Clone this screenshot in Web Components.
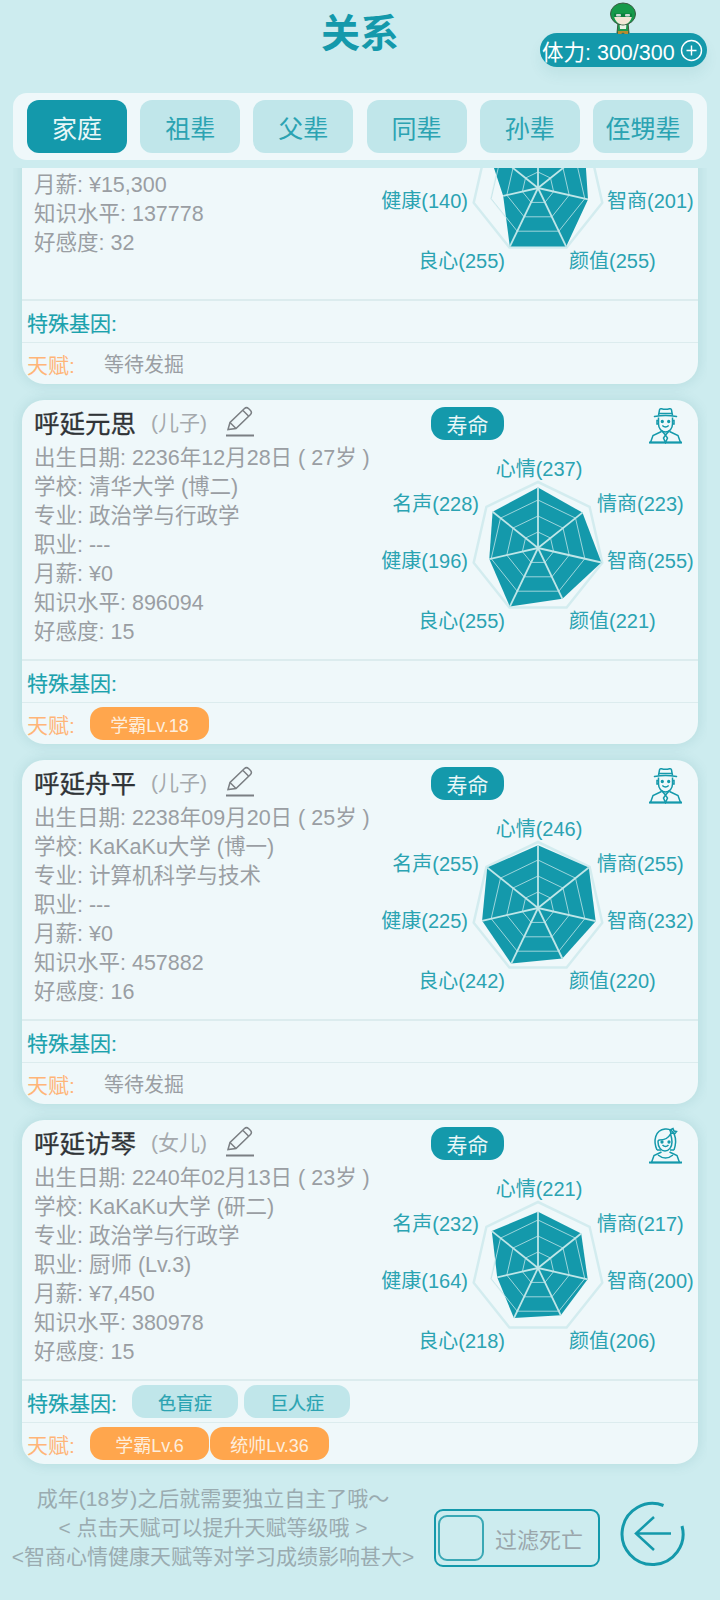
<!DOCTYPE html>
<html lang="zh"><head><meta charset="utf-8"><title>关系</title>
<style>
html,body{margin:0;padding:0;background:#cdecef}
body{font-family:"Liberation Sans","Noto Sans CJK SC",sans-serif}
</style></head>
<body>
<relation-page>
  <page-header slot="header"></page-header>
  <tab-bar slot="tabs">
    <tab-btn active>家庭</tab-btn><tab-btn>祖辈</tab-btn><tab-btn>父辈</tab-btn><tab-btn>同辈</tab-btn><tab-btn>孙辈</tab-btn><tab-btn>侄甥辈</tab-btn>
  </tab-bar>

  <rel-card name="呼延元德" role="(父亲)" icon="man" values="240,235,201,255,255,140,255">
    <div>出生日期: 2210年05月16日 ( 53岁 )</div><div>学校: 清华大学 (博士)</div><div>职业: 厨师 (Lv.10)</div><div>月薪: ¥15,300</div><div>知识水平: 137778</div><div>好感度: 32</div>
    <span slot="talents" class="none">等待发掘</span>
  </rel-card>

  <rel-card name="呼延元思" role="(儿子)" icon="man" values="237,223,255,221,255,196,228">
    <div>出生日期: 2236年12月28日 ( 27岁 )</div><div>学校: 清华大学 (博二)</div><div>专业: 政治学与行政学</div><div>职业: ---</div><div>月薪: ¥0</div><div>知识水平: 896094</div><div>好感度: 15</div>
    <info-chip slot="talents" kind="talent">学霸Lv.18</info-chip>
  </rel-card>

  <rel-card name="呼延舟平" role="(儿子)" icon="man" values="246,255,232,220,242,225,255">
    <div>出生日期: 2238年09月20日 ( 25岁 )</div><div>学校: KaKaKu大学 (博一)</div><div>专业: 计算机科学与技术</div><div>职业: ---</div><div>月薪: ¥0</div><div>知识水平: 457882</div><div>好感度: 16</div>
    <span slot="talents" class="none">等待发掘</span>
  </rel-card>

  <rel-card name="呼延访琴" role="(女儿)" icon="woman" values="221,217,200,206,218,164,232">
    <div>出生日期: 2240年02月13日 ( 23岁 )</div><div>学校: KaKaKu大学 (研二)</div><div>专业: 政治学与行政学</div><div>职业: 厨师 (Lv.3)</div><div>月薪: ¥7,450</div><div>知识水平: 380978</div><div>好感度: 15</div>
    <info-chip slot="genes" kind="gene">色盲症</info-chip><info-chip slot="genes" kind="gene">巨人症</info-chip>
    <info-chip slot="talents" kind="talent">学霸Lv.6</info-chip><info-chip slot="talents" kind="talent">统帅Lv.36</info-chip>
  </rel-card>

  <page-footer slot="footer"></page-footer>
</relation-page>

<script>
const TEAL='#1499ab';
function def(name,html,extra){
  customElements.define(name,class extends HTMLElement{
    constructor(){super();this.attachShadow({mode:'open'}).innerHTML=html;}
    connectedCallback(){if(extra)extra.call(this,this.shadowRoot);}
  });
}

def('relation-page',`<style>
:host{display:flex;flex-direction:column;width:720px;height:1600px;overflow:hidden;background:#cdecef;color:#333;
font-family:"Liberation Sans","Noto Sans CJK SC",sans-serif}
.scroller{margin:8px 13px 0;height:1310px;overflow:hidden;padding:0 9px;box-sizing:border-box;flex:none}
.list{margin-top:-128px;display:flex;flex-direction:column;gap:16px}
</style>
<slot name="header"></slot><slot name="tabs"></slot>
<div class="scroller"><div class="list"><slot></slot></div></div>
<slot name="footer"></slot>`);

def('page-header',`<style>
:host{display:block;height:93px;position:relative;flex:none}
.wrap{display:grid;grid-template-columns:1fr auto 1fr;height:100%}
h1{margin:10px 0 0;font-size:39px;line-height:48px;font-weight:700;color:#1499ab;grid-column:2}
.pill{grid-column:3;justify-self:end;margin:33px 13px 0 0;width:167px;height:34px;border-radius:17px;background:#1499ab;color:#fff;
font-size:21.5px;display:flex;align-items:center;padding-left:2px;box-sizing:border-box;box-shadow:0 8px 14px rgba(20,110,120,.07);white-space:nowrap}
.pill svg{margin-left:5px;flex:none}
.hero{position:absolute;left:609px;top:2px}
</style>
<div class="wrap"><h1>关系</h1>
<div class="pill">体力: 300/300<svg width="23" height="23" viewBox="0 0 23 23" fill="none" stroke="#fff" stroke-width="1.4"><circle cx="11.5" cy="11.5" r="10"/><path d="M11.5 6.5v10M6.5 11.5h10"/></svg></div></div>
<svg class="hero" width="28" height="32" viewBox="0 0 28 32">
<path d="M9 21h10l1 10h-12z" fill="#1d9a4f" stroke="#3a5a3a" stroke-width="1"/>
<path d="M10.500 21h7l-.5 6h-6z" fill="#e9f3e6"/>
<path d="M9 29h10v3h-3l-2-1.500-2 1.500h-3z" fill="#b98b2e"/>
<ellipse cx="14" cy="12" rx="12.500" ry="11" fill="#159a4a" stroke="#3d5a44" stroke-width="1"/>
<path d="M5 14c1 6 5 8.500 9 8.500s8-2.500 9-8.500z" fill="#f3e7d6"/>
<path d="M5 11.500h18v3.500H5z" fill="#0f7f3e"/><rect x="7" y="12" width="5" height="2.500" rx="1" fill="#cfd8d8"/><rect x="16" y="12" width="5" height="2.500" rx="1" fill="#cfd8d8"/>
</svg>`);

def('tab-bar',`<style>
:host{display:flex;justify-content:space-between;flex:none;margin:0 13px;padding:7px 14px;height:67px;box-sizing:border-box;background:#eff8fa;border-radius:14px;width:694px}
</style><slot></slot>`);

def('tab-btn',`<style>
:host{display:flex;align-items:center;justify-content:center;width:100px;height:53px;border-radius:12px;background:#c0e6ea;color:#2ba3b2;font-size:25px}
:host([active]){background:#1499ab;color:#e8f7f8}
</style><slot></slot>`);

def('info-chip',`<style>
:host{display:flex;align-items:center;justify-content:center;height:33px;border-radius:13px;font-size:18px;white-space:nowrap;flex:none}
:host([kind=talent]){width:119px;background:#ffa64d;color:#fdeedd}
:host([kind=gene]){width:106px;background:#c0e6ea;color:#2ba3b2}
</style><slot></slot>`);

const ICONS={
man:`<path d="M9.500 8.500 10.500 3c.2-1 1-1.500 2-1.200 2.500.7 5.500.7 8 0 1-.3 1.800.2 2 1.200l1 5.500M10 6.500h13"/><path d="M5.500 9.500q11 -2 22 0" stroke-linecap="round"/>
<path d="M9.500 10.500v6.500a7 8 0 0 0 14 0v-6.500"/><path d="M9.500 13.500H8v3.500h1.500M23.500 13.500H25v3.500h-1.500"/><path d="M13.300 18.500q3.200 3 6.400 0"/><circle cx="13.300" cy="14.500" r=".9" fill="currentColor"/><circle cx="19.700" cy="14.500" r=".9" fill="currentColor"/>
<path d="M12.500 24.500 4 28.500 1.500 35.500h30l-2.500-7-8.500-4"/><path d="M12.500 23.500 16.500 28l4-4.500M16.500 28l-2 3 2 4.500 2-4.500z"/><path d="M0 35.500h33" stroke-width="2"/>`,
woman:`<path d="M8 23C4 14 6 3 16 2c9-1 13 9 9 21"/><path d="M8 23h4M25 23h-4"/><path d="M10.500 13c5 0 9-2 11-6 1 3 1.500 5 1.500 8 0 5-3 9-7 9s-7-4-7-9c0-.8.500-2 1.500-2"/><path d="M21 3l3-1.500 1 2.500 2.500.5-1.500 2-2-.5-2 .5z"/>
<path d="M13.500 18q3 3 6 0"/><circle cx="13" cy="15" r=".9" fill="currentColor"/><circle cx="20" cy="15" r=".9" fill="currentColor"/>
<path d="M12.500 25 5 28.500 2.500 35.500h28l-2.500-7-7.500-3.500"/><path d="M9 28q7.500 6 15 0"/><path d="M0 35.500h33" stroke-width="2"/>`};

customElements.define('rel-card',class extends HTMLElement{
  constructor(){super();this.attachShadow({mode:'open'});}
  connectedCallback(){
    const g=a=>this.getAttribute(a)||'';
    this.shadowRoot.innerHTML=`<style>
:host{display:block;width:676px;height:344px;background:#eff8fa;border-radius:22px;box-shadow:0 0 14px rgba(10,100,110,.13);overflow:hidden;flex:none;box-sizing:border-box}
.top{display:flex;height:259px;border-bottom:2px solid #dcecee;box-sizing:content-box}
.left{flex:1;padding:6px 0 0 12px;min-width:0}
.name{display:flex;align-items:center;height:30px;margin-bottom:8px}
.name b{font-size:25.5px;font-weight:400;color:#2f3336;-webkit-text-stroke:.3px #2f3336}
.name i{font-style:normal;font-size:21px;color:#a5a9ad;margin-left:15px}
.name svg{margin-left:19px;flex:none}
.lines{font-size:21.500px;line-height:29px;color:#9a9ea3;white-space:nowrap}
.right{width:318px;flex:none}
.rt{display:flex;justify-content:space-between;align-items:flex-start;padding:7px 16px 0 51px;height:51px}
.life{width:73px;height:33px;border-radius:14px;background:${TEAL};color:#e8f7f8;font-size:21px;display:flex;align-items:center;justify-content:center}
.rt svg{color:${TEAL};flex:none}
.row{display:flex;align-items:center;padding-left:5px;height:41px;gap:6px;font-size:21px;white-space:nowrap}
.row.g{border-bottom:1px solid #dcecee;height:41px;color:#1ba2ad;-webkit-text-stroke:.2px #1ba2ad}
.row.t{color:#ffb578;gap:1px}
.lab{display:inline-block}
.g .lab{width:99px}.t .lab{width:62px}
.row.t ::slotted(.none){font-size:20px;color:#9a9ea3;margin-left:14px}
</style>
<div class="top"><div class="left">
<div class="name"><b>${g('name')}</b><i>${g('role')}</i>
<svg width="28" height="31" viewBox="0 0 28 31" fill="none" stroke="#7b7f83" stroke-width="1.500"><path d="M2 23.500 4 16.500 18.500 2.500q2-1.800 4 0l2 2q1.800 2 0 4L10 22.500z"/><path d="M4 16.500l6 6M17 4.500l5.500 5.500"/><path d="M0 29.500h28" stroke-width="2"/></svg></div>
<div class="lines"><slot></slot></div></div>
<div class="right"><div class="rt"><span class="life">寿命</span><svg width="33" height="37" viewBox="0 0 33 37" fill="none" stroke="currentColor" stroke-width="1.500">${ICONS[g('icon')]}</svg></div>
<radar-chart values="${g('values')}"></radar-chart></div></div>
<div class="row g"><span class="lab">特殊基因:</span><slot name="genes"></slot></div>
<div class="row t"><span class="lab">天赋:</span><slot name="talents"></slot></div>`;
  }
});

customElements.define('radar-chart',class extends HTMLElement{
  constructor(){super();this.attachShadow({mode:'open'});}
  connectedCallback(){
    const v=this.getAttribute('values').split(',').map(Number);
    const names=['心情','情商','智商','颜值','良心','健康','名声'];
    const cx=158,cy=90,R=65;
    const pt=(i,r)=>{const a=-Math.PI/2+i*2*Math.PI/7;return [(cx+r*Math.cos(a)).toFixed(1),(cy+r*Math.sin(a)).toFixed(1)];};
    const poly=r=>names.map((_,i)=>pt(i,r).join(',')).join(' ');
    const data=v.map((x,i)=>pt(i,x/255*R).join(',')).join(' ');
    const pos=[
      'left:0;right:0;text-align:center;top:-1px',
      'left:217px;top:34px',
      'left:227px;top:91px',
      'left:189px;top:151px',
      'right:193px;top:151px',
      'right:230px;top:91px',
      'right:219px;top:34px'];
    const labels=names.map((n,i)=>`<span style="${pos[i]}">${n}(${v[i]})</span>`).join('');
    let rings='';[16,32,48].forEach(r=>rings+=`<polygon points="${poly(r)}" fill="none" stroke="#bfe4e7" stroke-width="1" opacity=".8"/>`);
    let spokes='';names.forEach((_,i)=>{const p=pt(i,v[i]/255*R);spokes+=`<line x1="${cx}" y1="${cy}" x2="${p[0]}" y2="${p[1]}" stroke="#bfe6e8" stroke-width="1.800"/>`;});
    this.shadowRoot.innerHTML=`<style>
:host{display:block;position:relative;width:318px;height:180px}
svg{position:absolute;left:0;top:0}
span{position:absolute;font-size:20px;line-height:24px;color:#2ba3b2;white-space:nowrap}
</style>
<svg width="318" height="180" viewBox="0 0 318 180">
<polygon points="${poly(R+1)}" fill="none" stroke="#d3ecef" stroke-width="2.500"/>
<polygon points="${poly(R/4*3)}" fill="none" stroke="#e3f2f4" stroke-width="1"/>
<polygon points="${data}" fill="${TEAL}"/>
${rings}${spokes}</svg>${labels}`;
  }
});

def('page-footer',`<style>
:host{display:flex;flex:1;align-items:flex-start;position:relative}
.tips{width:426px;flex:none;text-align:center;font-size:21px;line-height:29px;color:#9aabb0;padding-top:6px;white-space:nowrap}
.filter{margin:31px 0 0 8px;width:166px;height:58px;box-sizing:border-box;border:2px solid ${TEAL};border-radius:9px;display:flex;align-items:center;padding-left:2px;gap:11px;font-size:22px;color:#9aa6ab;flex:none}
.box{width:46px;height:46px;box-sizing:border-box;border:2px solid #3aa8b5;border-radius:9px;flex:none}
svg{margin:23px 0 0 20px;flex:none}
</style>
<div class="tips"><div>成年(18岁)之后就需要独立自主了哦～</div><div>&lt; 点击天赋可以提升天赋等级哦 &gt;</div><div>&lt;智商心情健康天赋等对学习成绩影响甚大&gt;</div></div>
<div class="filter"><span class="box"></span><span>过滤死亡</span></div>
<svg width="66" height="66" viewBox="0 0 66 66" fill="none" stroke="${TEAL}" stroke-width="3"><path d="M62 25A30.500 30.500 0 1 1 43.500 4.500"/><path d="M51 32.500H17M34 16 16 32.500 34 49" stroke-width="2.500"/></svg>`);
</script>
</body></html>
